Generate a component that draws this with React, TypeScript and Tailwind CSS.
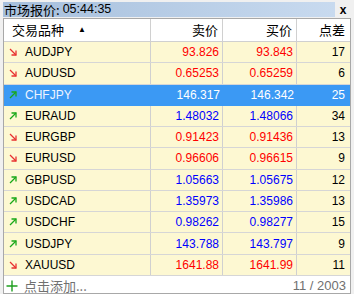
import React from "react";

type Row = { sym: string; up: boolean; bid: string; ask: string; spread: string; color: "red" | "blue"; sel?: boolean };

const rows: Row[] = [
  { sym: "AUDJPY", up: false, bid: "93.826", ask: "93.843", spread: "17", color: "red" },
  { sym: "AUDUSD", up: false, bid: "0.65253", ask: "0.65259", spread: "6", color: "red" },
  { sym: "CHFJPY", up: true, bid: "146.317", ask: "146.342", spread: "25", color: "blue", sel: true },
  { sym: "EURAUD", up: true, bid: "1.48032", ask: "1.48066", spread: "34", color: "blue" },
  { sym: "EURGBP", up: false, bid: "0.91423", ask: "0.91436", spread: "13", color: "red" },
  { sym: "EURUSD", up: false, bid: "0.96606", ask: "0.96615", spread: "9", color: "red" },
  { sym: "GBPUSD", up: true, bid: "1.05663", ask: "1.05675", spread: "12", color: "blue" },
  { sym: "USDCAD", up: true, bid: "1.35973", ask: "1.35986", spread: "13", color: "blue" },
  { sym: "USDCHF", up: true, bid: "0.98262", ask: "0.98277", spread: "15", color: "blue" },
  { sym: "USDJPY", up: true, bid: "143.788", ask: "143.797", spread: "9", color: "blue" },
  { sym: "XAUUSD", up: false, bid: "1641.88", ask: "1641.99", spread: "11", color: "red" },
];

const font = { fontFamily: '"Liberation Sans", "Noto Sans CJK SC", sans-serif' };

function Arrow({ up }: { up: boolean }) {
  const c = up ? "#18a818" : "#e83030";
  return up ? (
    <svg width="8" height="8" viewBox="0 0 8 8" className="shrink-0">
      <path d="M1 7 L7 1" stroke={c} strokeWidth="1.3" fill="none" />
      <path d="M2.5 1 H7 V5.5" stroke={c} strokeWidth="1.3" fill="none" />
    </svg>
  ) : (
    <svg width="8" height="8" viewBox="0 0 8 8" className="shrink-0">
      <path d="M1 1 L7 7" stroke={c} strokeWidth="1.3" fill="none" />
      <path d="M2.5 7 H7 V2.5" stroke={c} strokeWidth="1.3" fill="none" />
    </svg>
  );
}

export default function App() {
  return (
    <div className="w-[354px] h-[294px] bg-[#f0f0f0] overflow-hidden flex flex-col pl-[3px] pr-[3px] pt-[2px]" style={font}>
      <div className="flex items-center h-[15px] shrink-0">
        <div className="flex-1 h-full flex items-center pl-[1px] bg-gradient-to-r from-[#a6bfdc] to-[#c8daef] text-[13px] leading-none text-black">
          <span className="font-['Noto_Sans_CJK_SC']">市场报价:</span>
          <span className="ml-[3px] text-[12.5px]">05:44:35</span>
        </div>
        <div className="w-[16px] h-full flex items-center justify-center text-[12px] font-bold leading-none text-black">x</div>
      </div>
      <div className="mt-[1px] flex-1 bg-white border border-[#a8a8a8] flex flex-col overflow-hidden">
        <div className="flex h-[23px] shrink-0 border-b border-[#d0d0d0] text-[13px] text-black">
          <div className="w-[147px] border-r border-[#d0d0d0] flex items-center pl-[8px] gap-[14px]">
            <span className="font-['Noto_Sans_CJK_SC']">交易品种</span>
            <span className="text-[8px] leading-none">▲</span>
          </div>
          <div className="w-[72px] border-r border-[#d0d0d0] flex items-center justify-end pr-[4px] font-['Noto_Sans_CJK_SC']">卖价</div>
          <div className="w-[74px] border-r border-[#d0d0d0] flex items-center justify-end pr-[4px] font-['Noto_Sans_CJK_SC']">买价</div>
          <div className="flex-1 flex items-center justify-end pr-[5px] font-['Noto_Sans_CJK_SC']">点差</div>
        </div>
        {rows.map((r) => {
          const num = r.sel ? "text-white" : r.color === "red" ? "text-[#ff0000]" : "text-[#0000ff]";
          return (
            <div
              key={r.sym}
              className={`flex h-[21.27px] shrink-0 border-b text-[12px] ${r.sel ? "bg-[#3b99f4] border-[#3b99f4]" : "bg-[#fdf8d2] border-[#d6d6d6]"}`}
            >
              <div className={`w-[147px] flex items-center pl-[5px] ${r.sel ? "text-[#eef4ff]" : "text-black border-r border-[#d0d0d0]"}`}>
                <Arrow up={r.up} />
                <span className="ml-[8px]">{r.sym}</span>
              </div>
              <div className={`w-[72px] flex items-center justify-end pr-[3px] ${num} ${r.sel ? "" : "border-r border-[#d0d0d0]"}`}>{r.bid}</div>
              <div className={`w-[74px] flex items-center justify-end pr-[3px] ${num} ${r.sel ? "" : "border-r border-[#d0d0d0]"}`}>{r.ask}</div>
              <div className={`flex-1 flex items-center justify-end pr-[5px] ${r.sel ? "text-white" : "text-black"}`}>{r.spread}</div>
            </div>
          );
        })}
        <div className="flex-1 flex items-center justify-between pl-[2px] pr-[4px] text-[12px] text-[#707070]">
          <div className="flex items-center">
            <svg width="12" height="12" viewBox="0 0 12 12" className="mr-[6px] shrink-0">
              <path d="M6 0.5 V11.5 M0.5 6 H11.5" stroke="#1e9e1e" strokeWidth="1.4" fill="none" />
            </svg>
            <span className="font-['Noto_Sans_CJK_SC'] text-[13px]">点击添加...</span>
          </div>
          <span className="text-[13px]">11 / 2003</span>
        </div>
      </div>
    </div>
  );
}
